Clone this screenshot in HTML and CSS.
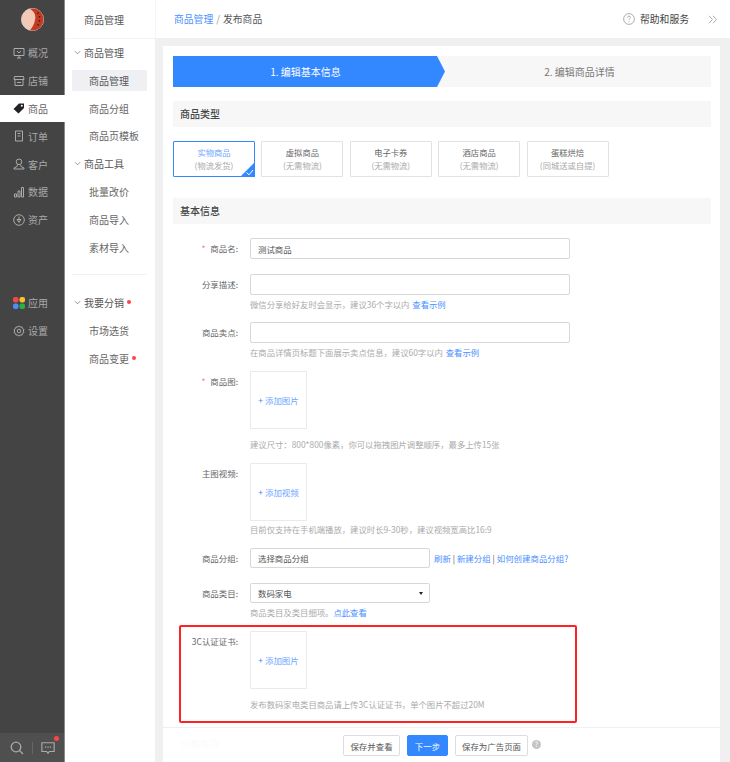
FILE: index.html
```html
<!DOCTYPE html>
<html lang="zh-CN">
<head>
<meta charset="utf-8">
<title>发布商品</title>
<link rel="stylesheet" href="styles.css">
</head>
<body>
<div class="app">
  <aside class="sidebar">
    <div class="logo">
      <svg width="23" height="23" viewBox="0 0 23 23"><circle cx="11.500" cy="11.500" r="11" fill="#f3c9b5" stroke="#d8d0c8" stroke-width="1"/><path d="M9 .8C14 4 15 8 14 12C13.500 16 11 20 9 22.200A11 11 0 1 0 9 .8z" fill="#c23a22"/><path d="M17 4.500v1.500M18.500 8v1.500M18.500 12v1.500M17 16v1.500" stroke="#2e1a12" stroke-width="1.200"/></svg>
    </div>
    <nav class="side-list">
      <a class="side-item"><svg class="ic" viewBox="0 0 12 12"><path d="M1 1.500h10v7H1zM6 8.500V11M4 11h4M4 4l2 2 2-2"/></svg>概况</a>
      <a class="side-item"><svg class="ic" viewBox="0 0 12 12"><path d="M1.500 1.500h9l.5 3H1zM2 4.500v6h8v-6M4 7.500h4"/></svg>店铺</a>
      <a class="side-item side-item-on"><svg class="ic ic-solid" viewBox="0 0 12 12"><path d="M.5 7L6 1.500h5v4.500L5.500 11.500z"/><circle cx="8.800" cy="3.700" r="1" fill="#fff"/></svg>商品</a>
      <a class="side-item"><svg class="ic" viewBox="0 0 12 12"><path d="M2.500 1h7v10h-7zM4.500 3.500h3M4.500 6h3"/></svg>订单</a>
      <a class="side-item"><svg class="ic" viewBox="0 0 12 12"><circle cx="6" cy="3.800" r="2.800"/><path d="M4.500 6.500L4 8.500 1 10v1h10v-1L8 8.500 7.500 6.500"/></svg>客户</a>
      <a class="side-item"><svg class="ic" viewBox="0 0 12 12"><path d="M1.500 8v3h2V8zM5 5v6h2V5zM8.500 1.500V11h2V1.500z"/></svg>数据</a>
      <a class="side-item"><svg class="ic" viewBox="0 0 12 12"><circle cx="6" cy="6" r="5.300"/><path d="M6 2.500v4M4 5.500L6 8.500l2-3z"/></svg>资产</a>
    </nav>
    <nav class="side-list side-list-lower">
      <a class="side-item"><svg class="ic-apps" viewBox="0 0 12 12"><rect x="0" y="0" width="5.500" height="5.500" rx="2" fill="#f04a44"/><rect x="6.500" y="0" width="5.500" height="5.500" rx="2" fill="#fbc02d"/><rect x="0" y="6.500" width="5.500" height="5.500" rx="2" fill="#4c8df6"/><rect x="6.500" y="6.500" width="5.500" height="5.500" rx="2" fill="#27b34a"/></svg>应用</a>
      <a class="side-item"><svg class="ic" viewBox="0 0 12 12"><path d="M6 .800l1.200 1.300 1.800-.2.400 1.700 1.600.9-.7 1.500.7 1.500-1.600.9-.4 1.700-1.800-.2L6 11.200 4.800 9.900l-1.800.2-.4-1.700L1 7.500 1.700 6 1 4.500l1.600-.9.4-1.700 1.800.2z"/><circle cx="6" cy="6" r="1.800"/></svg>设置</a>
    </nav>
    <div class="side-bottom">
      <svg class="ic-bottom" viewBox="0 0 14 14"><circle cx="6" cy="6" r="4.800"/><path d="M9.500 9.500L13 13"/></svg>
      <span class="side-sep"></span>
      <span class="msg">
        <svg class="ic-bottom" viewBox="0 0 16 14"><path d="M1 1h14v10H9.500L8 13l-1.500-2H1z"/><path d="M4.500 6h1.500M7.300 6h1.500M10 6h1.500" stroke-width="1.500"/></svg>
        <i class="msg-dot"></i>
      </span>
    </div>
  </aside>

  <aside class="subnav">
    <div class="subnav-head">商品管理</div>
    <div class="subnav-list">
      <div class="sub-group"><svg class="chev" viewBox="0 0 8 5"><path d="M1 1l3 3 3-3"/></svg>商品管理</div>
      <a class="sub-item sub-item-on">商品管理</a>
      <a class="sub-item">商品分组</a>
      <a class="sub-item">商品页模板</a>
      <div class="sub-group"><svg class="chev" viewBox="0 0 8 5"><path d="M1 1l3 3 3-3"/></svg>商品工具</div>
      <a class="sub-item">批量改价</a>
      <a class="sub-item">商品导入</a>
      <a class="sub-item">素材导入</a>
      <hr class="sub-divider">
      <div class="sub-group"><svg class="chev" viewBox="0 0 8 5"><path d="M1 1l3 3 3-3"/></svg>我要分销<i class="dot"></i></div>
      <a class="sub-item">市场选货</a>
      <a class="sub-item">商品变更<i class="dot"></i></a>
    </div>
  </aside>

  <main class="main">
    <header class="topbar">
      <div class="crumbs"><a class="crumb-link">商品管理</a><span class="crumb-sep">/</span><span>发布商品</span></div>
      <div class="top-tools">
        <svg class="help-ic" viewBox="0 0 12 12"><circle cx="6" cy="6" r="5.400"/><path d="M4.500 4.700C4.500 3.700 5.200 3.200 6 3.200s1.500.5 1.500 1.400c0 1-1.500 1.200-1.500 2.300M6 8.200v1"/></svg>
        <span class="help-text">帮助和服务</span>
        <svg class="collapse-ic" viewBox="0 0 10 9"><path d="M1 .8l3.500 3.700L1 8.200M5 .8l3.500 3.700L5 8.200"/></svg>
      </div>
    </header>

    <div class="content">
      <div class="steps">
        <div class="step step-on">1. 编辑基本信息</div>
        <div class="step">2. 编辑商品详情</div>
      </div>

      <h2 class="band band-first">商品类型</h2>
      <div class="cards">
        <div class="card card-on">实物商品<small>(物流发货)</small>
          <svg class="card-tick" viewBox="0 0 15 15"><path d="M15 0v15H0z" fill="#3388ff"/><path d="M6.500 10.500l2.500 2.300 4-4.800" fill="none" stroke="#fff" stroke-width="1"/></svg>
        </div>
        <div class="card">虚拟商品<small>(无需物流)</small></div>
        <div class="card">电子卡券<small>(无需物流)</small></div>
        <div class="card">酒店商品<small>(无需物流)</small></div>
        <div class="card">蛋糕烘焙<small>(同城送或自提)</small></div>
      </div>

      <h2 class="band band-second">基本信息</h2>

      <div class="row row-first">
        <label class="label"><em class="req">*</em>商品名:</label>
        <div class="field"><div class="input">测试商品</div></div>
      </div>
      <div class="row row-wide">
        <label class="label">分享描述:</label>
        <div class="field"><div class="input"></div>
          <p class="hint">微信分享给好友时会显示，建议36个字以内 <a class="link link-after">查看示例</a></p></div>
      </div>
      <div class="row row-tight">
        <label class="label">商品卖点:</label>
        <div class="field"><div class="input"></div>
          <p class="hint">在商品详情页标题下面展示卖点信息，建议60字以内 <a class="link link-after">查看示例</a></p></div>
      </div>
      <div class="row">
        <label class="label"><em class="req">*</em>商品图:</label>
        <div class="field"><div class="upload"><span class="plus">+</span> 添加图片</div>
          <p class="hint hint-far">建议尺寸：800*800像素，你可以拖拽图片调整顺序，最多上传15张</p></div>
      </div>
      <div class="row">
        <label class="label">主图视频:</label>
        <div class="field"><div class="upload"><span class="plus">+</span> 添加视频</div>
          <p class="hint hint-near">目前仅支持在手机端播放，建议时长9-30秒，建议视频宽高比16:9</p></div>
      </div>
      <div class="row">
        <label class="label label-short">商品分组:</label>
        <div class="field field-inline"><div class="input input-short">选择商品分组</div>
          <div class="links"><a class="link">刷新</a> <span class="pipe">|</span> <a class="link">新建分组</a> <span class="pipe pipe-alt">|</span> <a class="link">如何创建商品分组?</a></div></div>
      </div>
      <div class="row row-wide">
        <label class="label label-short">商品类目:</label>
        <div class="field"><div class="input input-short input-select">数码家电<i class="caret"></i></div>
          <p class="hint">商品类目及类目细项。<a class="link">点此查看</a></p></div>
      </div>

      <section class="cert">
        <div class="row row-flush">
          <label class="label label-cert">3C认证证书:</label>
          <div class="field"><div class="upload"><span class="plus">+</span> 添加图片</div>
            <p class="hint hint-far">发布数码家电类目商品请上传3C认证证书，单个图片不超过20M</p></div>
        </div>
      </section>

      <h2 class="band band-third">价格库存</h2>

      <footer class="actions">
        <button class="btn btn-save">保存并查看</button>
        <button class="btn btn-primary">下一步</button>
        <button class="btn btn-ad">保存为广告页面</button>
        <span class="help-dot">?</span>
      </footer>
    </div>
  </main>
</div>
</body>
</html>
```
FILE: styles.css
```css
* { box-sizing: border-box; }
html, body { margin: 0; height: 100%; }
body {
  font-family: "Noto Sans CJK SC", "Liberation Sans", sans-serif;
  font-size: 8.450px;
  color: #555;
  background: #f0f0f0;
  overflow: hidden;
}
a { color: inherit; text-decoration: none; }
i, em { font-style: normal; }

.app { display: flex; height: 762px; }

/* primary sidebar */
.sidebar {
  width: 65px;
  flex: none;
  display: flex;
  flex-direction: column;
  background: #444;
  border-right: 1px solid #8a8a8a;
}
.logo { height: 39px; flex: none; display: flex; justify-content: center; padding-top: 8px; }
.side-list { display: flex; flex-direction: column; }
.side-list-lower { margin-top: 55.400px; }
.side-item {
  height: 27.800px;
  width: 65px;
  display: flex;
  align-items: center;
  gap: 3px;
  padding-left: 13px;
  font-size: 10px;
  color: #aaa;
}
.side-item-on { background: #fff; color: #666; }
.ic { width: 12px; height: 12px; flex: none; fill: none; stroke: #aaa; stroke-width: 1; }
.ic-solid { fill: #222; stroke: none; }
.ic-apps { width: 12px; height: 12px; flex: none; }
.side-bottom {
  margin-top: auto;
  height: 29px;
  background: #4f4f4f;
  display: flex;
  align-items: center;
  padding: 0 9px 0 10px;
  justify-content: space-between;
}
.ic-bottom { width: 14px; height: 14px; fill: none; stroke: #aaa; stroke-width: 1.300; display: block; }
.side-sep { width: 1px; height: 12px; background: #666; }
.msg { position: relative; display: block; }
.msg-dot { position: absolute; top: -5px; right: -4px; width: 5px; height: 5px; border-radius: 50%; background: #f44; }

/* secondary nav */
.subnav { width: 90px; flex: none; background: #fff; font-size: 10px; color: #666; }
.subnav-head { height: 39px; display: flex; align-items: center; padding-left: 19px; border-bottom: 1px solid #f4f4f4; color: #555; }
.subnav-list { display: flex; flex-direction: column; padding: 0 8px 0 7px; }
.sub-group { height: 27.800px; display: flex; align-items: center; padding: 0 0 1px 2px; color: #555; }
.chev { width: 7px; height: 5px; margin-right: 3px; fill: none; stroke: #888; stroke-width: 1; }
.sub-item { height: 21px; margin: 3px 0 3.800px; padding-left: 17px; display: flex; align-items: center; }
.sub-item-on { background: #eef0f3; color: #555; }
.sub-divider { border: 0; height: 1px; background: #f2f2f2; margin: 13px 0 13.600px; width: 75px; }
.dot { width: 4px; height: 4px; margin-left: 3px; border-radius: 50%; background: #f44; }

/* main */
.main { flex: 1; min-width: 0; display: flex; flex-direction: column; }
.topbar {
  height: 38px;
  flex: none;
  background: #fff;
  border-left: 1px solid #f6f6f6;
  display: flex;
  align-items: center;
  justify-content: space-between;
  padding: 0 12px 0 18px;
  font-size: 9.800px;
  color: #555;
}
.crumb-link { color: #4a90ff; }
.crumb-sep { margin: 0 3px; color: #999; }
.top-tools { display: flex; align-items: center; }
.help-ic { width: 12px; height: 12px; fill: none; stroke: #999; stroke-width: .800; }
.help-text { margin: 0 19px 0 5px; color: #444; }
.collapse-ic { width: 10px; height: 9px; fill: none; stroke: #aaa; stroke-width: 1; }

.content {
  position: relative;
  flex: 1;
  min-height: 0;
  overflow: hidden;
  margin: 8px 10px 0 8px;
  padding: 10px 9px 0 10px;
  background: #fff;
}

.steps { display: flex; height: 31px; background: #f7f7f7; font-size: 10px; }
.step { flex: 1; display: flex; align-items: center; justify-content: center; padding-left: 2px; color: #777; }
.step-on {
  flex: none;
  width: 273px;
  padding: 0 8px 0 0;
  color: #fff;
  background: #38f;
  clip-path: polygon(0 0, 264px 0, 272px 50%, 264px 100%, 0 100%);
}

.band {
  margin: 0;
  height: 26px;
  padding: 0 0 1px 7px;
  display: flex;
  align-items: center;
  background: #f7f7f7;
  font-size: 10px;
  font-weight: 500;
  color: #444;
}
.band-first { margin-top: 14px; }
.band-second { margin-top: 21px; }
.band-third { margin-top: 8px; color: #ccc; font-weight: 400; }

.cards { display: flex; gap: 6.400px; margin-top: 14px; }
.card {
  position: relative;
  width: 82px;
  height: 36px;
  border: 1px solid #e2e2e2;
  border-radius: 1px;
  display: flex;
  flex-direction: column;
  align-items: center;
  justify-content: center;
  line-height: 13px;
  font-size: 8.300px;
  color: #666;
}
.card small { font-size: 8.300px; color: #aaa; }
.card-on { border-color: #38f; color: #6ea6ff; }
.card-tick { position: absolute; right: -1px; bottom: -1px; width: 15px; height: 15px; }

.row { display: flex; margin-top: 13px; }
.row-first { margin-top: 14px; }
.row-wide { margin-top: 15px; }
.row-tight { margin-top: 12px; }
.row-flush { margin-top: 0; }
.label { width: 65px; margin-right: 12px; flex: none; line-height: 21px; text-align: right; color: #666; white-space: nowrap; }
.label-short { line-height: 20px; }
.label-cert { width: 57px; }
.req { color: #f77; margin-right: 5px; }
.field { min-width: 0; }
.field-inline { display: flex; align-items: center; }
.input {
  width: 320px;
  height: 21px;
  padding-left: 7px;
  border: 1px solid #d8d8d8;
  border-radius: 2px;
  display: flex;
  align-items: center;
  color: #555;
}
.input-short { width: 180px; height: 20px; }
.input-select { justify-content: space-between; padding-right: 6px; }
.caret { width: 0; height: 0; border: 2.500px solid transparent; border-top: 3.500px solid #222; border-bottom: 0; }
.hint { margin: 3px 0 0; line-height: 12px; font-size: 8.350px; color: #aaa; white-space: nowrap; }
.hint-far { margin-top: 9px; }
.hint-near { margin-top: 2px; }
.link { color: #4a90ff; }
.link-after { margin-left: 1px; }
.links { margin-left: 4px; white-space: nowrap; color: #4a90ff; }
.pipe { color: #555; }
.pipe-alt { color: #936; }
.upload {
  width: 57px;
  height: 58px;
  border: 1px solid #eaeaea;
  display: flex;
  align-items: center;
  justify-content: center;
  gap: 2px;
  color: #6ea6ff;
}
.plus { color: #38f; }

.cert {
  width: 398px;
  height: 98px;
  margin: 7px 0 0 6px;
  padding-top: 4px;
  border: 2px solid #f22;
  border-radius: 2px;
}

.actions {
  position: absolute;
  left: 0;
  right: 0;
  bottom: 0;
  height: 35px;
  padding: 7px 0 0 180px;
  display: flex;
  align-items: flex-start;
  gap: 7px;
  background: rgba(255, 255, 255, .9);
  border-top: 1px solid #f0f0f0;
}
.btn {
  height: 21px;
  padding: 0;
  border: 1px solid #ddd;
  border-radius: 2px;
  background: #fff;
  font: inherit;
  color: #555;
}
.btn-save { width: 57px; }
.btn-ad { width: 73px; }
.btn-primary { width: 41px; background: #38f; border-color: #38f; color: #fff; }
.help-dot {
  width: 9px;
  height: 9px;
  margin: 5px 0 0 -3px;
  border-radius: 50%;
  background: #c4c4c4;
  color: #fff;
  font-size: 7px;
  line-height: 9px;
  text-align: center;
}
```
